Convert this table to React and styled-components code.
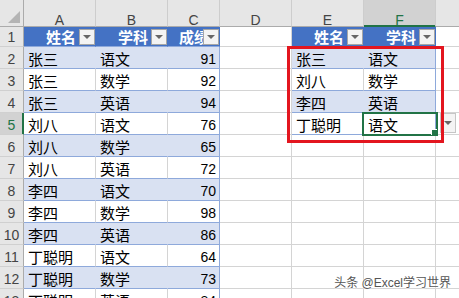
import React from "react";
import styled, { createGlobalStyle, css } from "styled-components";

const GlobalStyle = createGlobalStyle`
  html, body {
    margin: 0;
    padding: 0;
    background: #fff;
    overflow: hidden;
  }
  body {
    font-family: "Liberation Sans", "Noto Sans CJK SC", sans-serif;
  }
`;

const COLS = ["A", "B", "C", "D", "E", "F", "G"];

// 成绩表 (A:C)
const scores = [
  ["张三", "语文", 91],
  ["张三", "数学", 92],
  ["张三", "英语", 94],
  ["刘八", "语文", 76],
  ["刘八", "数学", 65],
  ["刘八", "英语", 72],
  ["李四", "语文", 70],
  ["李四", "数学", 98],
  ["李四", "英语", 86],
  ["丁聪明", "语文", 64],
  ["丁聪明", "数学", 73],
  ["丁聪明", "英语", 84],
];

// 查询表 (E:F)
const picks = [
  ["张三", "语文"],
  ["刘八", "数学"],
  ["李四", "英语"],
  ["丁聪明", "语文"],
];

const GRID = "#d4d4d4";
const LINE = "#8ea9db";
const BLUE = "#4472c4";
const BAND = "#d9e1f2";
const GREEN = "#217346";

const fills = {
  plain: "#fff",
  band: BAND,
  blue: BLUE,
};

const Sheet = styled.div`
  position: relative;
  display: grid;
  grid-template-columns: 24px 72px 72px 52px 72px 72px 72px 72px;
  grid-template-rows: 27px 20px repeat(12, 22px);
  width: 459px;
  height: 298px;
  overflow: hidden;
`;

const Corner = styled.div`
  box-sizing: border-box;
  display: flex;
  justify-content: flex-end;
  align-items: flex-end;
  padding: 0 3px 3px 0;
  background: #e6e6e6;
  border-right: 1px solid #ababab;
  border-bottom: 1px solid #ababab;
`;

const ColHead = styled.div`
  box-sizing: border-box;
  display: flex;
  justify-content: center;
  align-items: flex-start;
  padding-top: 12px;
  font-size: 14px;
  line-height: 17px;
  color: ${(p) => (p.$active ? GREEN : "#444")};
  background: ${(p) => (p.$active ? "#d2d2d2" : "#e6e6e6")};
  border-right: 1px solid #cdcdcd;
  border-bottom: 1px solid ${(p) => (p.$active ? GREEN : "#ababab")};
  ${(p) =>
    p.$active &&
    css`
      box-shadow: inset 0 -1px 0 ${GREEN};
    `}
`;

const RowHead = styled.div`
  box-sizing: border-box;
  display: flex;
  justify-content: center;
  align-items: flex-end;
  font-size: 14px;
  line-height: 17px;
  color: ${(p) => (p.$active ? GREEN : "#444")};
  background: ${(p) => (p.$active ? "#d2d2d2" : "#e6e6e6")};
  border-right: 1px solid ${(p) => (p.$active ? GREEN : "#ababab")};
  border-bottom: 1px solid #d0d0d0;
  ${(p) =>
    p.$active &&
    css`
      box-shadow: inset -1px 0 0 ${GREEN};
    `}
`;

const Cell = styled.div`
  position: relative;
  box-sizing: border-box;
  display: flex;
  align-items: flex-end;
  justify-content: ${(p) => (p.$num ? "flex-end" : "flex-start")};
  padding: 0 3px 0 4px;
  font-size: ${(p) => (p.$num ? "14px" : "15px")};
  line-height: 17px;
  white-space: nowrap;
  color: #000;
  background: ${(p) => fills[p.$fill || "plain"]};
  border-right: 1px solid ${(p) => p.$rc || GRID};
  border-bottom: 1px solid ${(p) => p.$bc || GRID};
  z-index: ${(p) => (p.$sel ? 3 : "auto")};
`;

const HeadCell = styled(Cell)`
  justify-content: flex-end;
  padding-right: 0;
  color: #fff;
  font-weight: bold;
`;

const FilterButton = styled.span`
  align-self: flex-start;
  flex: none;
  margin: 2px 0 0 ${(p) => p.$gap}px;
  width: 16px;
  height: 16px;
  box-sizing: border-box;
  display: flex;
  align-items: center;
  justify-content: center;
  background: #f3f3f3;
  border: 1px solid #a6a6a6;
`;

const Caret = styled.span`
  width: 0;
  height: 0;
  border-left: 4px solid transparent;
  border-right: 4px solid transparent;
  border-top: 4px solid #666;
`;

const Selection = styled.span`
  position: absolute;
  top: -1px;
  left: -2px;
  right: -3px;
  bottom: -2px;
  border: 2px solid ${GREEN};
`;

const FillHandle = styled.span`
  position: absolute;
  right: -3px;
  bottom: -2px;
  width: 6px;
  height: 6px;
  background: ${GREEN};
  box-shadow: -1px -1px 0 #fff;
`;

const ListButton = styled.span`
  align-self: flex-start;
  flex: none;
  width: 16px;
  height: 20px;
  box-sizing: border-box;
  display: flex;
  align-items: center;
  justify-content: center;
  background: #f4f4f4;
  border: 1px solid #c6c6c6;
`;

const RedFrame = styled.div`
  position: absolute;
  left: 287px;
  top: 46px;
  width: 157px;
  height: 97px;
  box-sizing: border-box;
  border: 3px solid #e3161f;
  z-index: 5;
`;

const Watermark = styled.div`
  position: absolute;
  right: 8px;
  bottom: 8px;
  font-family: "Liberation Sans", "Noto Sans CJK SC", sans-serif;
  font-size: 12px;
  line-height: 14px;
  color: #555;
  text-shadow: 0 0 2px #fff, 0 0 2px #fff;
  z-index: 6;
`;

// gap between header text and its filter button (C is overlapped by the button)
const headGap = { A: 3, B: 3, C: -6, E: 3, F: 3 };

function bandOf(r) {
  return r % 2 === 0 ? "band" : "plain";
}

function Header({ col, label }) {
  return (
    <HeadCell $fill="blue" $rc={BLUE} $bc={LINE}>
      {label}
      <FilterButton $gap={headGap[col]}>
        <Caret />
      </FilterButton>
    </HeadCell>
  );
}

function renderCell(col, r) {
  const key = col + r;

  // left table A:C
  if (col === "A" || col === "B" || col === "C") {
    const last = col === "C";
    if (r === 1) {
      const label = { A: "姓名", B: "学科", C: "成绩" }[col];
      return <Header key={key} col={col} label={label} />;
    }
    const row = scores[r - 2];
    const fill = bandOf(r);
    const idx = { A: 0, B: 1, C: 2 }[col];
    return (
      <Cell
        key={key}
        $fill={fill}
        $num={last}
        $rc={last ? LINE : fill === "band" ? BAND : GRID}
        $bc={LINE}
      >
        {row[idx]}
      </Cell>
    );
  }

  // right table E:F
  if ((col === "E" || col === "F") && r <= 5) {
    const last = col === "F";
    if (r === 1) {
      return <Header key={key} col={col} label={col === "E" ? "姓名" : "学科"} />;
    }
    const fill = bandOf(r);
    const sel = col === "F" && r === 5;
    return (
      <Cell
        key={key}
        $fill={fill}
        $sel={sel}
        $rc={last ? LINE : fill === "band" ? BAND : GRID}
        $bc={LINE}
      >
        {picks[r - 2][last ? 1 : 0]}
        {sel && (
          <>
            <Selection />
            <FillHandle />
          </>
        )}
      </Cell>
    );
  }

  // data validation list arrow next to the active cell
  if (col === "G" && r === 5) {
    return (
      <Cell key={key}>
        <ListButton>
          <Caret />
        </ListButton>
      </Cell>
    );
  }

  return <Cell key={key} />;
}

const rows = Array.from({ length: 13 }, (_, i) => i + 1);

const App = () => {
  return (
    <>
      <GlobalStyle />
      <Sheet>
        <Corner>
          <svg width="12" height="12" viewBox="0 0 12 12">
            <polygon points="12,0 12,12 0,12" fill="#b4b4b4" />
          </svg>
        </Corner>
        {COLS.map((c) => (
          <ColHead key={c} $active={c === "F"}>
            {c}
          </ColHead>
        ))}
        {rows.map((r) => (
          <React.Fragment key={r}>
            <RowHead $active={r === 5}>{r}</RowHead>
            {COLS.map((c) => renderCell(c, r))}
          </React.Fragment>
        ))}
        <RedFrame />
        <Watermark>头条 @Excel学习世界</Watermark>
      </Sheet>
    </>
  );
};

export default App;
